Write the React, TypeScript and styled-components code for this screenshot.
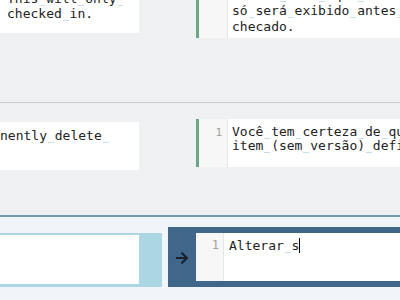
import React from "react";
import styled, { createGlobalStyle } from "styled-components";
import { FaArrowRight } from "react-icons/fa";

const GlobalStyle = createGlobalStyle`
  html, body {
    margin: 0;
    padding: 0;
    background: #eff0f2;
    overflow: hidden;
  }
  body {
    font-family: "DejaVu Sans Mono", "Liberation Mono", monospace;
    font-size: 13px;
    color: #222;
  }
`;

const Page = styled.div`
  width: 400px;
  height: 300px;
  display: flex;
  flex-direction: column;
  overflow: hidden;
`;

const Section = styled.div<{ height: number; divider?: boolean }>`
  height: ${(p) => p.height}px;
  flex-shrink: 0;
  border-bottom: ${(p) => (p.divider ? "1px solid #cbcdd0" : "none")};
  overflow: hidden;
`;

const Row = styled.div`
  display: grid;
  grid-template-columns: 139px 1fr;
  column-gap: 57px;
  align-items: start;
`;

const SourceCard = styled.div<{ offset: number; indent: number }>`
  margin-top: ${(p) => p.offset}px;
  min-height: 48px;
  box-sizing: border-box;
  padding: 6px 0 3px ${(p) => p.indent}px;
  background: #fff;
  line-height: 15px;
  white-space: pre;
  overflow: hidden;
`;

const EditorCard = styled.div<{ offset: number }>`
  margin-top: ${(p) => p.offset}px;
  min-height: 48px;
  box-sizing: border-box;
  display: flex;
  background: #fff;
  border-left: 3px solid #6aa685;
  overflow: hidden;
`;

const Gutter = styled.div<{ width: number; pad: number; top: number; size: number }>`
  width: ${(p) => p.width}px;
  flex-shrink: 0;
  box-sizing: border-box;
  background: #f7f7f7;
  border-right: 1px solid #e6e6e6;
  padding: ${(p) => p.top}px ${(p) => p.pad}px 0 0;
  text-align: right;
  color: #a3a3a3;
  font-size: ${(p) => p.size}px;
  line-height: 15px;
`;

const Lines = styled.div<{ pad: number; top: number; lh: number }>`
  padding: ${(p) => p.top}px 0 3px ${(p) => p.pad}px;
  line-height: ${(p) => p.lh}px;
  white-space: pre;
`;

const Sp = styled.span`
  display: inline-block;
  width: 1ch;
  height: 3px;
  vertical-align: -3px;
  position: relative;
  &::after {
    content: "";
    position: absolute;
    left: 1px;
    right: 1px;
    bottom: 0;
    height: 1px;
    background: #c4dde6;
  }
`;

const Caret = styled.span`
  display: inline-block;
  width: 0;
  height: 15px;
  border-left: 1px solid #000;
  vertical-align: -3px;
`;

const Bottom = styled.div`
  flex: 1;
  border-top: 2px solid #6d9fb4;
  background: #f1f4f8;
  display: grid;
  grid-template-columns: 162px 1fr;
  column-gap: 6px;
  align-items: start;
`;

const PreviewPanel = styled.div`
  margin-top: 16px;
  background: #acd6e4;
  padding: 2px 23px 3px 0;
`;

const PreviewBox = styled.div`
  height: 49px;
  background: #fff;
`;

const InputPanel = styled.div`
  margin-top: 10px;
  height: 60px;
  background: #40668a;
  display: flex;
  align-items: stretch;
`;

const ArrowCell = styled.div`
  width: 28px;
  flex-shrink: 0;
  display: flex;
  align-items: center;
  justify-content: center;
  color: #18222f;
  padding-top: 1px;
`;

const InputEditor = styled.div`
  flex: 1;
  margin: 6px 0;
  background: #fff;
  display: flex;
`;

const Marked: React.FC<{ text: string }> = ({ text }) => {
  const parts = text.split(" ");
  return (
    <>
      {parts.map((w, i) => (
        <React.Fragment key={i}>
          {w}
          {i < parts.length - 1 && <Sp />}
        </React.Fragment>
      ))}
    </>
  );
};

const TextLines: React.FC<{ lines: string[] }> = ({ lines }) => (
  <>
    {lines.map((l, i) => (
      <div key={i}>
        <Marked text={l} />
      </div>
    ))}
  </>
);

export default function App() {
  return (
    <Page>
      <GlobalStyle />
      <Section height={102} divider>
        <Row>
          <SourceCard offset={-15} indent={7}>
            <TextLines lines={["This will only ", "checked in."]} />
          </SourceCard>
          <EditorCard offset={-18}>
            <Gutter width={29} pad={5} top={5} size={11}>
              {" "}
            </Gutter>
            <Lines pad={4} top={5} lh={16}>
              <TextLines
                lines={[
                  "Aviso: isto aqui ",
                  "só será exibido antes ",
                  "checado.",
                ]}
              />
            </Lines>
          </EditorCard>
        </Row>
      </Section>
      <Section height={112}>
        <Row>
          <SourceCard offset={19} indent={0}>
            <div style={{ marginLeft: "-5ch" }}>
              <Marked text="permanently delete " />
            </div>
          </SourceCard>
          <EditorCard offset={16}>
            <Gutter width={29} pad={5} top={6} size={11}>
              1
            </Gutter>
            <Lines pad={4} top={6} lh={13}>
              <TextLines
                lines={[
                  "Você tem certeza de que deseja ",
                  "item (sem versão) definitivamente?",
                ]}
              />
            </Lines>
          </EditorCard>
        </Row>
      </Section>
      <Bottom>
        <PreviewPanel>
          <PreviewBox />
        </PreviewPanel>
        <InputPanel>
          <ArrowCell>
            <FaArrowRight size={14} />
          </ArrowCell>
          <InputEditor>
            <Gutter width={28} pad={4} top={5} size={12}>
              1
            </Gutter>
            <Lines pad={5} top={5} lh={15}>
              <Marked text="Alterar s" />
              <Caret />
            </Lines>
          </InputEditor>
        </InputPanel>
      </Bottom>
    </Page>
  );
}
